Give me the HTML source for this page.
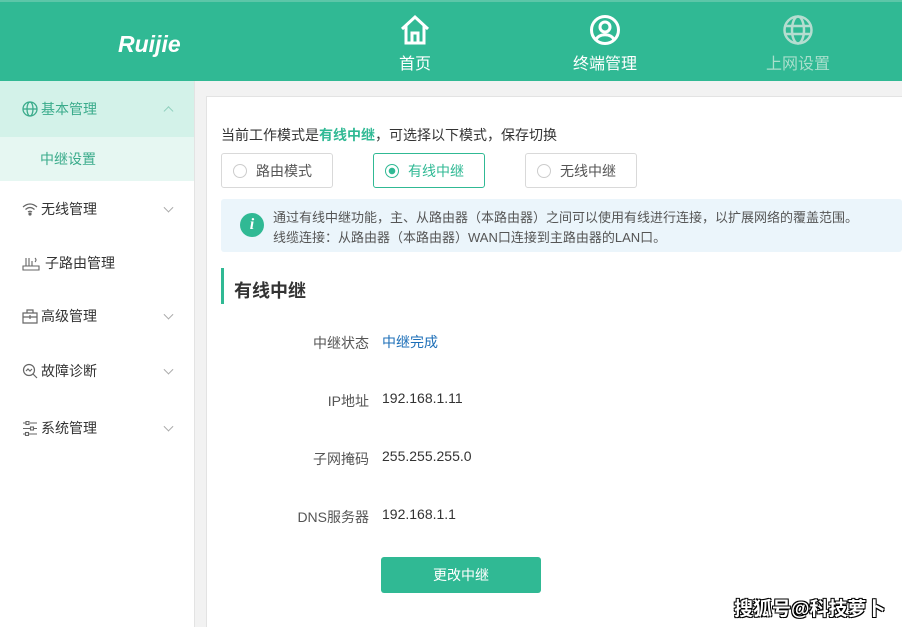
<!DOCTYPE html>
<html><head><meta charset="utf-8"><style>
*{margin:0;padding:0;box-sizing:border-box}
html,body{width:902px;height:627px;overflow:hidden}
body{font-family:"Liberation Sans","Noto Sans CJK SC",sans-serif;background:#f2f2f2;position:relative;color:#333}
.hdr{position:absolute;left:0;top:0;width:902px;height:81px;background:#30b994;border-top:2px solid #5cc6a8}
.logo{position:absolute;left:118px;top:29px;color:#fff;font-size:23px;font-weight:bold;font-style:italic;letter-spacing:0px;font-family:"Liberation Sans",sans-serif}
.nav{position:absolute;top:12px;text-align:center;color:#fff;font-size:16px;width:100px}
.nav svg{display:block;margin:0 auto 4px}
.side{position:absolute;left:0;top:81px;width:195px;height:560px;background:#fff;border-right:1px solid #e3e3e3}
.it{position:absolute;left:0;width:194px;font-size:14px;color:#333;padding-left:22px;display:flex;align-items:center}
.it svg{margin-right:3px}
.chev{position:absolute;right:22px;top:50%;width:7px;height:7px;border-right:1px solid #aaa;border-bottom:1px solid #aaa;transform:translateY(-70%) rotate(45deg)}
.card{position:absolute;left:206px;top:96px;width:700px;height:560px;background:#fff;border:1px solid #e3e3e3}
.rb{position:absolute;top:153px;height:35px;width:112px;border:1px solid #d9d9d9;border-radius:3px;font-size:14px;color:#555;display:flex;align-items:center;padding-left:34px}
.rb i{position:absolute;left:11px;top:10px;width:14px;height:14px;border:1px solid #ccc;border-radius:50%}
.lbl{position:absolute;width:369px;text-align:right;font-size:14px;color:#555}
.val{position:absolute;left:382px;font-size:14px;color:#333}
</style></head><body>
<div class="hdr">
<div class="logo">Ruijie</div>
<div class="nav" style="left:365px"><svg width="32" height="32" viewBox="0 0 32 32" fill="none" stroke="#fff" stroke-width="3"><path d="M3 15 L16 3 L29 15 M7 12 V29 H25 V12 M13 29 V19 H19 V29"/></svg>首页</div>
<div class="nav" style="left:555px"><svg width="32" height="32" viewBox="0 0 32 32" fill="none" stroke="#fff" stroke-width="3"><circle cx="16" cy="16" r="13.5"/><circle cx="16" cy="13" r="5"/><path d="M7 26 C9 19 23 19 25 26"/></svg>终端管理</div>
<div class="nav" style="left:748px;color:#a8dfcc"><svg width="32" height="32" viewBox="0 0 32 32" fill="none" stroke="#b5ddd0" stroke-width="2.5"><circle cx="16" cy="16" r="13.5"/><ellipse cx="16" cy="16" rx="6" ry="13.5"/><path d="M3 12 H29 M3 20 H29"/></svg>上网设置</div>
</div>
<div class="side">
<div class="it" style="top:0;height:56px;background:#d3f2e9;color:#3aab8b"><svg width="16" height="16" viewBox="0 0 16 16" fill="none" stroke="#3aab8b" stroke-width="1.3"><circle cx="8" cy="8" r="7"/><ellipse cx="8" cy="8" rx="3" ry="7"/><path d="M1 8H15"/></svg>基本管理<span class="chev" style="transform:translateY(-20%) rotate(225deg);border-color:#8fcfbd"></span></div>
<div class="it" style="top:56px;height:44px;background:#e6f7f2;color:#3aab8b;padding-left:40px">中继设置</div>
<div class="it" style="top:108px;height:40px"><svg width="16" height="14" viewBox="0 0 16 14" fill="none" stroke="#666" stroke-width="1.2"><path d="M1 5 Q8 -1 15 5 M3.5 7.5 Q8 3.5 12.5 7.5 M6 10 Q8 8.5 10 10"/><circle cx="8" cy="12" r="1" fill="#666"/></svg>无线管理<span class="chev"></span></div>
<div class="it" style="top:162px;height:40px"><svg width="20" height="16" viewBox="0 0 20 16" fill="none" stroke="#666" stroke-width="1.1"><path d="M1 11H17V15H1Z M4 11V3 M7 11V3 M10 11V6 M13 3 Q15 5 13 7"/></svg>子路由管理</div>
<div class="it" style="top:215px;height:40px"><svg width="16" height="15" viewBox="0 0 16 15" fill="none" stroke="#666" stroke-width="1.2"><path d="M1 4H15V14H1Z M5 4V1H11V4 M1 8H15 M8 6V10"/></svg>高级管理<span class="chev"></span></div>
<div class="it" style="top:270px;height:40px"><svg width="16" height="16" viewBox="0 0 16 16" fill="none" stroke="#666" stroke-width="1.2"><circle cx="7" cy="7" r="5.5"/><path d="M11 11L15 15 M4 8L6 6L8 8L10 6"/></svg>故障诊断<span class="chev"></span></div>
<div class="it" style="top:327px;height:40px"><svg width="16" height="15" viewBox="0 0 16 15" fill="none" stroke="#666" stroke-width="1.1"><path d="M1 2H4 M8 2H15 M1 7.5H8 M12 7.5H15 M1 13H3 M7 13H15"/><rect x="4" y="0.5" width="3" height="3"/><rect x="8.5" y="6" width="3" height="3"/><rect x="3.5" y="11.5" width="3" height="3"/></svg>系统管理<span class="chev"></span></div>
</div>
<div class="card"></div>
<div style="position:absolute;left:221px;top:125px;font-size:14px;color:#333">当前工作模式是<b style="color:#30b994">有线中继</b>，可选择以下模式，保存切换</div>
<div class="rb" style="left:221px"><i></i>路由模式</div>
<div class="rb" style="left:373px;border-color:#30b994;color:#30b994"><i style="border-color:#30b994;background:radial-gradient(circle,#30b994 3px,#fff 3.5px)"></i>有线中继</div>
<div class="rb" style="left:525px"><i></i>无线中继</div>
<div style="position:absolute;left:221px;top:199px;width:681px;height:53px;background:#ebf5fb;border-radius:3px"></div>
<div style="position:absolute;left:240px;top:213px;width:24px;height:24px;border-radius:50%;background:#30b994;color:#fff;font:italic bold 16px 'Liberation Serif',serif;text-align:center;line-height:24px">i</div>
<div style="position:absolute;left:273px;top:208px;font-size:13px;color:#555;line-height:20px">通过有线中继功能，主、从路由器（本路由器）之间可以使用有线进行连接，以扩展网络的覆盖范围。<br>线缆连接：从路由器（本路由器）WAN口连接到主路由器的LAN口。</div>
<div style="position:absolute;left:221px;top:268px;width:3px;height:36px;background:#30b994"></div>
<div style="position:absolute;left:234px;top:277px;font-size:18px;font-weight:bold;color:#333">有线中继</div>
<div class="lbl" style="top:333px">中继状态</div><div class="val" style="top:332px;color:#1d6fb8">中继完成</div>
<div class="lbl" style="top:391px">IP地址</div><div class="val" style="top:390px">192.168.1.11</div>
<div class="lbl" style="top:449px">子网掩码</div><div class="val" style="top:448px">255.255.255.0</div>
<div class="lbl" style="top:507px">DNS服务器</div><div class="val" style="top:506px">192.168.1.1</div>
<div style="position:absolute;left:381px;top:557px;width:160px;height:36px;background:#30b994;border-radius:3px;color:#fff;font-size:14px;text-align:center;line-height:36px">更改中继</div>
<div style="position:absolute;left:734px;top:594px;font-size:19px;font-weight:bold;color:#fff;text-shadow:1px 1px 0 #000,-1px -1px 0 #000,1px -1px 0 #000,-1px 1px 0 #000">搜狐号@科技萝卜</div>
</body></html>
